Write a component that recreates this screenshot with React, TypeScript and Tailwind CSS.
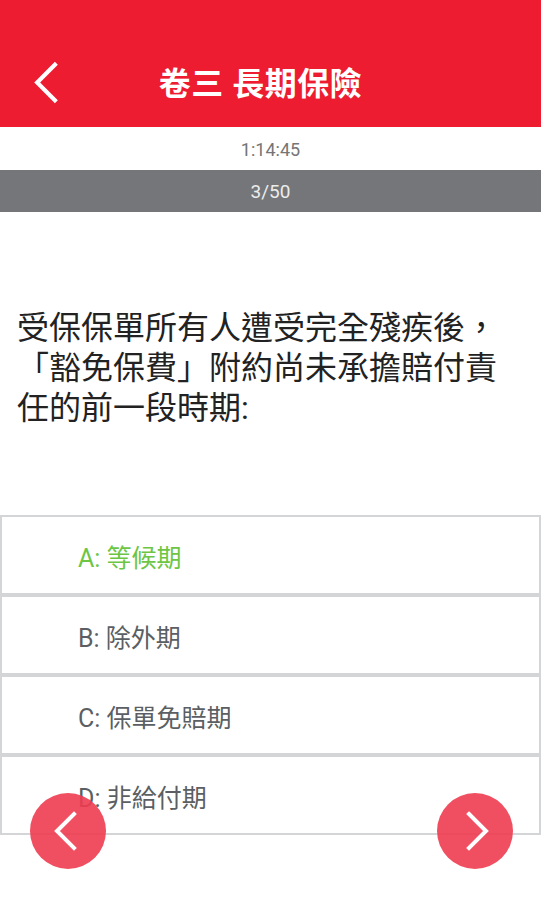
import React from 'react'

const FONT = { fontFamily: 'Roboto, "Noto Sans CJK TC", "Noto Sans CJK SC", sans-serif' }

const OPTIONS = [
  { label: 'A: 等候期', correct: true },
  { label: 'B: 除外期', correct: false },
  { label: 'C: 保單免賠期', correct: false },
  { label: 'D: 非給付期', correct: false }
]

function Chevron({ dir, className }: { dir: 'left' | 'right'; className?: string }) {
  return (
    <svg viewBox="0 0 24 40" className={className} fill="none" stroke="white" strokeWidth="4" strokeLinecap="square">
      {dir === 'left' ? <path d="M21 3 L4 20 L21 37" /> : <path d="M3 3 L20 20 L3 37" />}
    </svg>
  )
}

export default function App() {
  return (
    <div className="relative w-[541px] h-[900px] bg-white overflow-hidden" style={FONT}>
      <div className="h-[127px] bg-[#ed1c30] relative flex items-center justify-center pt-[40px]">
        <Chevron dir="left" className="absolute left-[33px] top-[61px] w-[25px] h-[43px]" />
        <h1 className="text-white text-[32px] font-bold tracking-[0.5px] pr-[20px]">卷三 長期保險</h1>
      </div>

      <div className="h-[43px] flex items-center justify-center pt-[2px] text-[18px] text-[#757575]">1:14:45</div>
      <div className="h-[42px] bg-[#757679] flex items-center justify-center pt-[2px] text-[19px] text-[#ececec]">3/50</div>

      <p className="px-[17px] pt-[96px] text-[32px] leading-[40px] text-[#222]">
        受保保單所有人遭受完全殘疾後，「豁免保費」附約尚未承擔賠付責任的前一段時期:
      </p>

      <div className="mt-[87px]">
        {OPTIONS.map((o) => (
          <div
            key={o.label}
            className="h-[80px] border-2 border-[#d3d5d7] flex items-center pl-[76px] pt-[8px]"
          >
            <span className={`text-[25px] ${o.correct ? 'text-[#6cc644]' : 'text-[#5b5f63]'}`}>{o.label}</span>
          </div>
        ))}
      </div>

      <button className="absolute left-[30px] top-[793px] w-[76px] h-[76px] rounded-full bg-[#ee3c50]/90 flex items-center justify-center">
        <Chevron dir="left" className="w-[24px] h-[40px] -ml-[6px]" />
      </button>
      <button className="absolute left-[437px] top-[793px] w-[76px] h-[76px] rounded-full bg-[#ee3c50]/90 flex items-center justify-center">
        <Chevron dir="right" className="w-[24px] h-[40px] ml-[6px]" />
      </button>
    </div>
  )
}
